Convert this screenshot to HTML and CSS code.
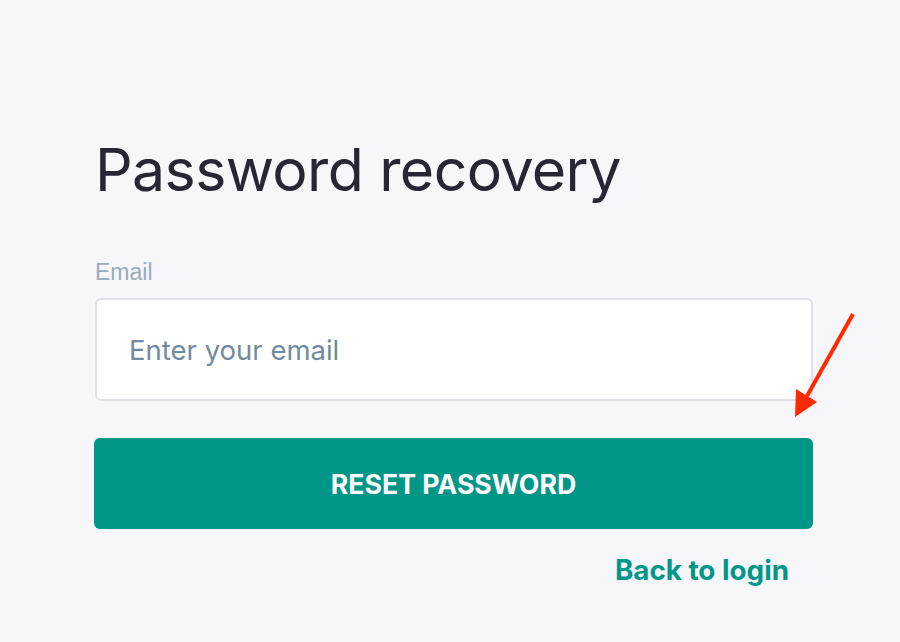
FILE: index.html
```html
<!DOCTYPE html>
<html lang="en">
<head>
<meta charset="utf-8">
<title>Password recovery</title>
<link rel="stylesheet" href="styles.css">
</head>
<body>
<main class="page">
  <form class="recovery">
    <h1 class="title">Password recovery</h1>
    <label class="label" for="email">Email</label>
    <input class="input" id="email" type="email" placeholder="Enter your email">
    <button class="btn" type="button">RESET PASSWORD</button>
    <div class="back-row"><a class="back" href="#">Back to login</a></div>
  </form>
  <svg class="annot-arrow" width="80" height="120" viewBox="0 0 80 120">
    <line x1="73" y1="14" x2="27" y2="96" stroke="#ff2a00" stroke-width="4" stroke-linecap="butt"/>
    <polygon points="15,117 16,89 37,102" fill="#ff2a00"/>
  </svg>
</main>
</body>
</html>
```
FILE: styles.css
```css
html, body {
  margin: 0;
  padding: 0;
  background: #f7f7fb;
}
.page {
  position: relative;
  width: 900px;
  height: 642px;
  overflow: hidden;
}
.recovery {
  display: flex;
  flex-direction: column;
  width: 719px;
  padding: 134px 0 0 94px;
}
.title {
  margin: 0 0 0 1px;
  font-family: Inter, "Liberation Sans", sans-serif;
  font-weight: 400;
  font-size: 59px;
  line-height: 72px;
  color: #272733;
  letter-spacing: -0.6px;
}
.label {
  margin: 52px 0 0 1px;
  font-family: "Liberation Sans", Arial, sans-serif;
  font-size: 23px;
  line-height: 28px;
  color: #9aabbe;
}
.input {
  box-sizing: border-box;
  margin-top: 12px;
  margin-left: 1px;
  width: 718px;
  height: 103px;
  border: 2px solid #e1e1ea;
  border-radius: 6px;
  background: #ffffff;
  padding: 0 32px;
  font-family: Inter, "Open Sans", sans-serif;
  font-size: 27.5px;
  color: #272733;
  outline: none;
}
.input::placeholder {
  color: #73899f;
  opacity: 1;
}
.btn {
  box-sizing: border-box;
  margin-top: 37px;
  width: 719px;
  height: 91px;
  border: 0;
  border-radius: 6px;
  background: #009688;
  color: #ffffff;
  font-family: Inter, "Liberation Sans", sans-serif;
  font-weight: 700;
  font-size: 26.7px;
  letter-spacing: 0;
}
.back-row {
  display: flex;
  justify-content: flex-end;
  padding-right: 24px;
  margin-top: 24px;
}
.back {
  font-family: Inter, "Liberation Sans", sans-serif;
  font-weight: 700;
  font-size: 27.8px;
  line-height: 34px;
  color: #00968a;
  text-decoration: none;
}
.annot-arrow {
  position: absolute;
  left: 780px;
  top: 300px;
}
```
